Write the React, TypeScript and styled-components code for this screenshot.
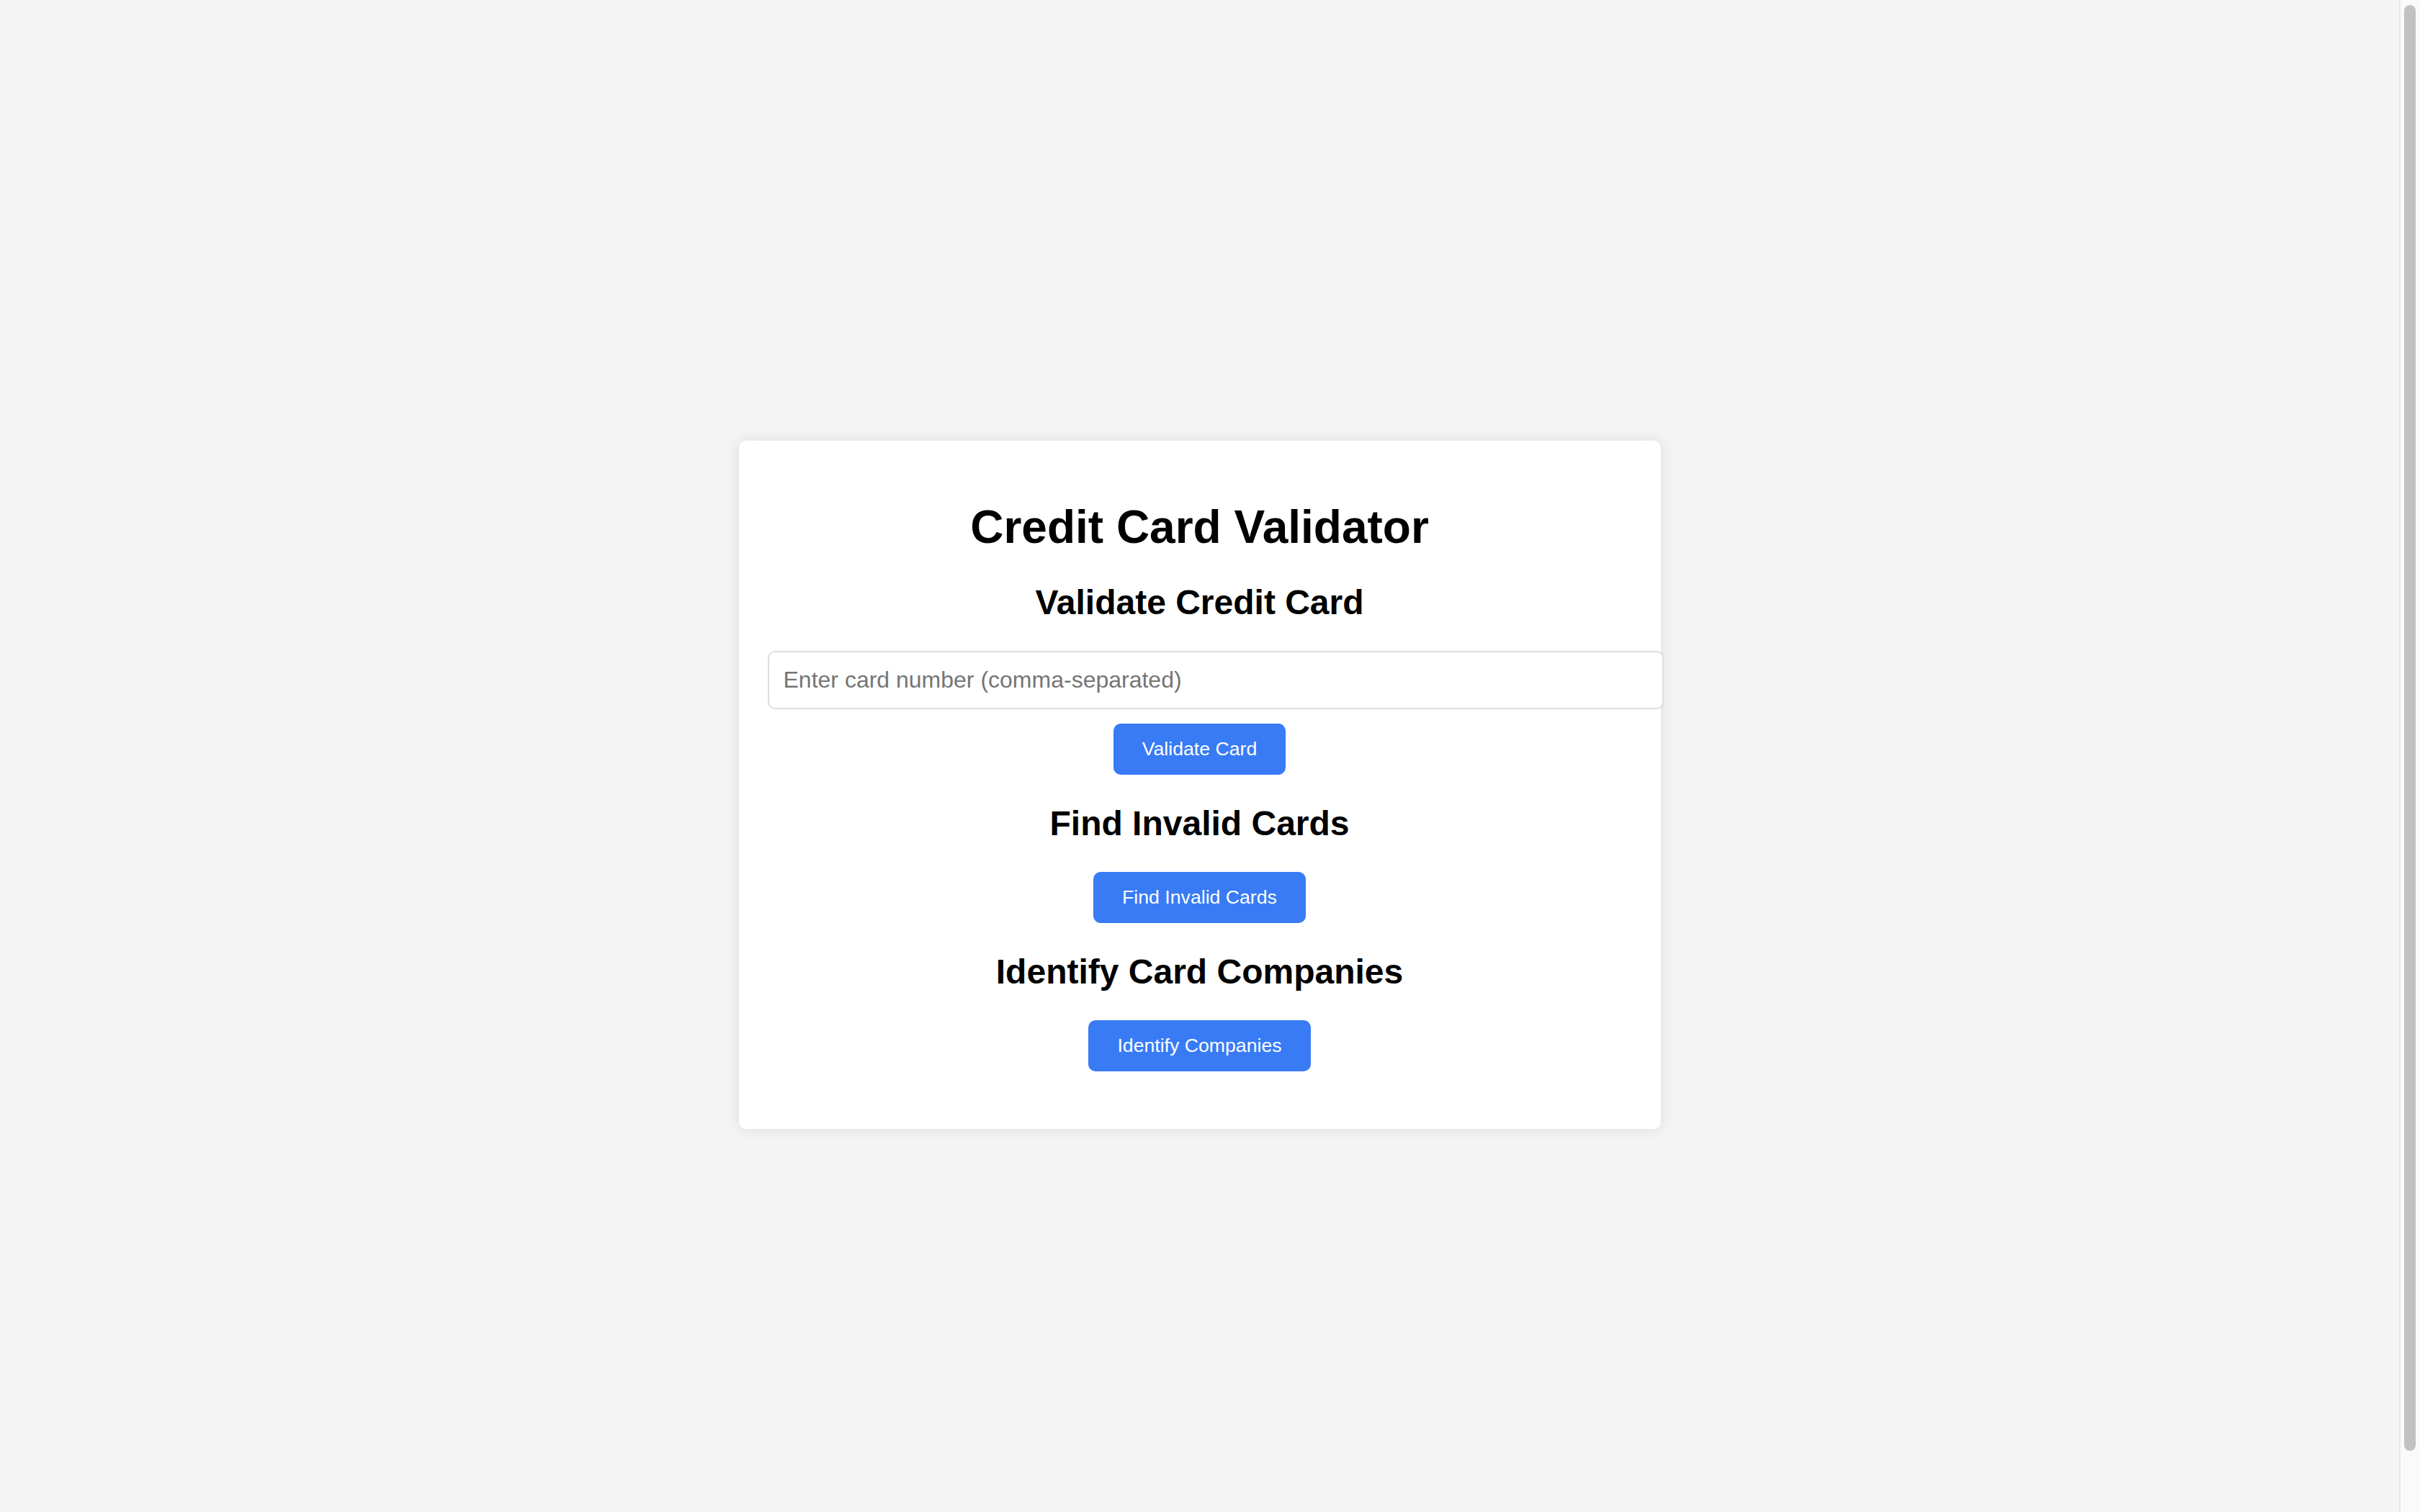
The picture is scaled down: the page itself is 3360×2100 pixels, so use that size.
import React from "react";
import styled, { createGlobalStyle } from "styled-components";

const GlobalStyle = createGlobalStyle`
  html, body {
    margin: 0;
  }
  body {
    font-family: "Liberation Sans", Arial, Helvetica, sans-serif;
    background: #f4f4f4;
  }
`;

const Page = styled.div`
  height: 100vh;
  margin-right: 29px;
  padding: 40px;
  display: flex;
  justify-content: center;
  align-items: center;
`;

const Card = styled.main`
  width: 100%;
  max-width: 1200px;
  padding: 40px;
  background: #ffffff;
  border-radius: 10px;
  box-shadow: 0 0 20px rgba(0, 0, 0, 0.1);
  text-align: center;
`;

const Title = styled.h1`
  font-size: 64px;
  font-weight: 700;
  color: #000;
  margin: 43px 0 0;
`;

const Section = styled.section`
  display: flex;
  flex-direction: column;
  align-items: center;
  margin-top: 40px;
  &:last-child {
    margin-bottom: 40px;
  }
`;

const Heading = styled.h2`
  font-size: 48px;
  font-weight: 700;
  color: #000;
  margin: 0 0 40px;
`;

const CardInput = styled.input`
  align-self: flex-start;
  box-sizing: content-box;
  width: 100%;
  padding: 20px;
  border: 2px solid #dddddd;
  border-radius: 10px;
  font-family: "Liberation Sans", Arial, sans-serif;
  font-size: 32px;
  color: #000;
  outline: none;
  &::placeholder {
    color: #757575;
  }
`;

const ActionButton = styled.button<{ $spaced?: boolean }>`
  margin-top: ${(p) => (p.$spaced ? "20px" : "0")};
  padding: 20px 40px;
  border: none;
  border-radius: 10px;
  background: #387bf5;
  color: #ffffff;
  font-family: "Liberation Sans", Arial, sans-serif;
  font-size: 26.67px;
  line-height: normal;
  cursor: pointer;
`;

const ScrollTrack = styled.div`
  position: fixed;
  top: 0;
  right: 0;
  width: 27px;
  height: 100vh;
  background: #fafafa;
  border-left: 2px solid #e8e8e8;
`;

const ScrollThumb = styled.div`
  position: absolute;
  top: 7px;
  left: 5px;
  width: 16px;
  height: 2008px;
  border-radius: 8px;
  background: #c1c1c1;
`;

export default function App() {
  return (
    <>
      <GlobalStyle />
      <Page>
        <Card>
          <Title>Credit Card Validator</Title>
          <Section>
            <Heading>Validate Credit Card</Heading>
            <CardInput type="text" placeholder="Enter card number (comma-separated)" />
            <ActionButton $spaced>Validate Card</ActionButton>
          </Section>
          <Section>
            <Heading>Find Invalid Cards</Heading>
            <ActionButton>Find Invalid Cards</ActionButton>
          </Section>
          <Section>
            <Heading>Identify Card Companies</Heading>
            <ActionButton>Identify Companies</ActionButton>
          </Section>
        </Card>
      </Page>
      <ScrollTrack aria-hidden>
        <ScrollThumb />
      </ScrollTrack>
    </>
  );
}
